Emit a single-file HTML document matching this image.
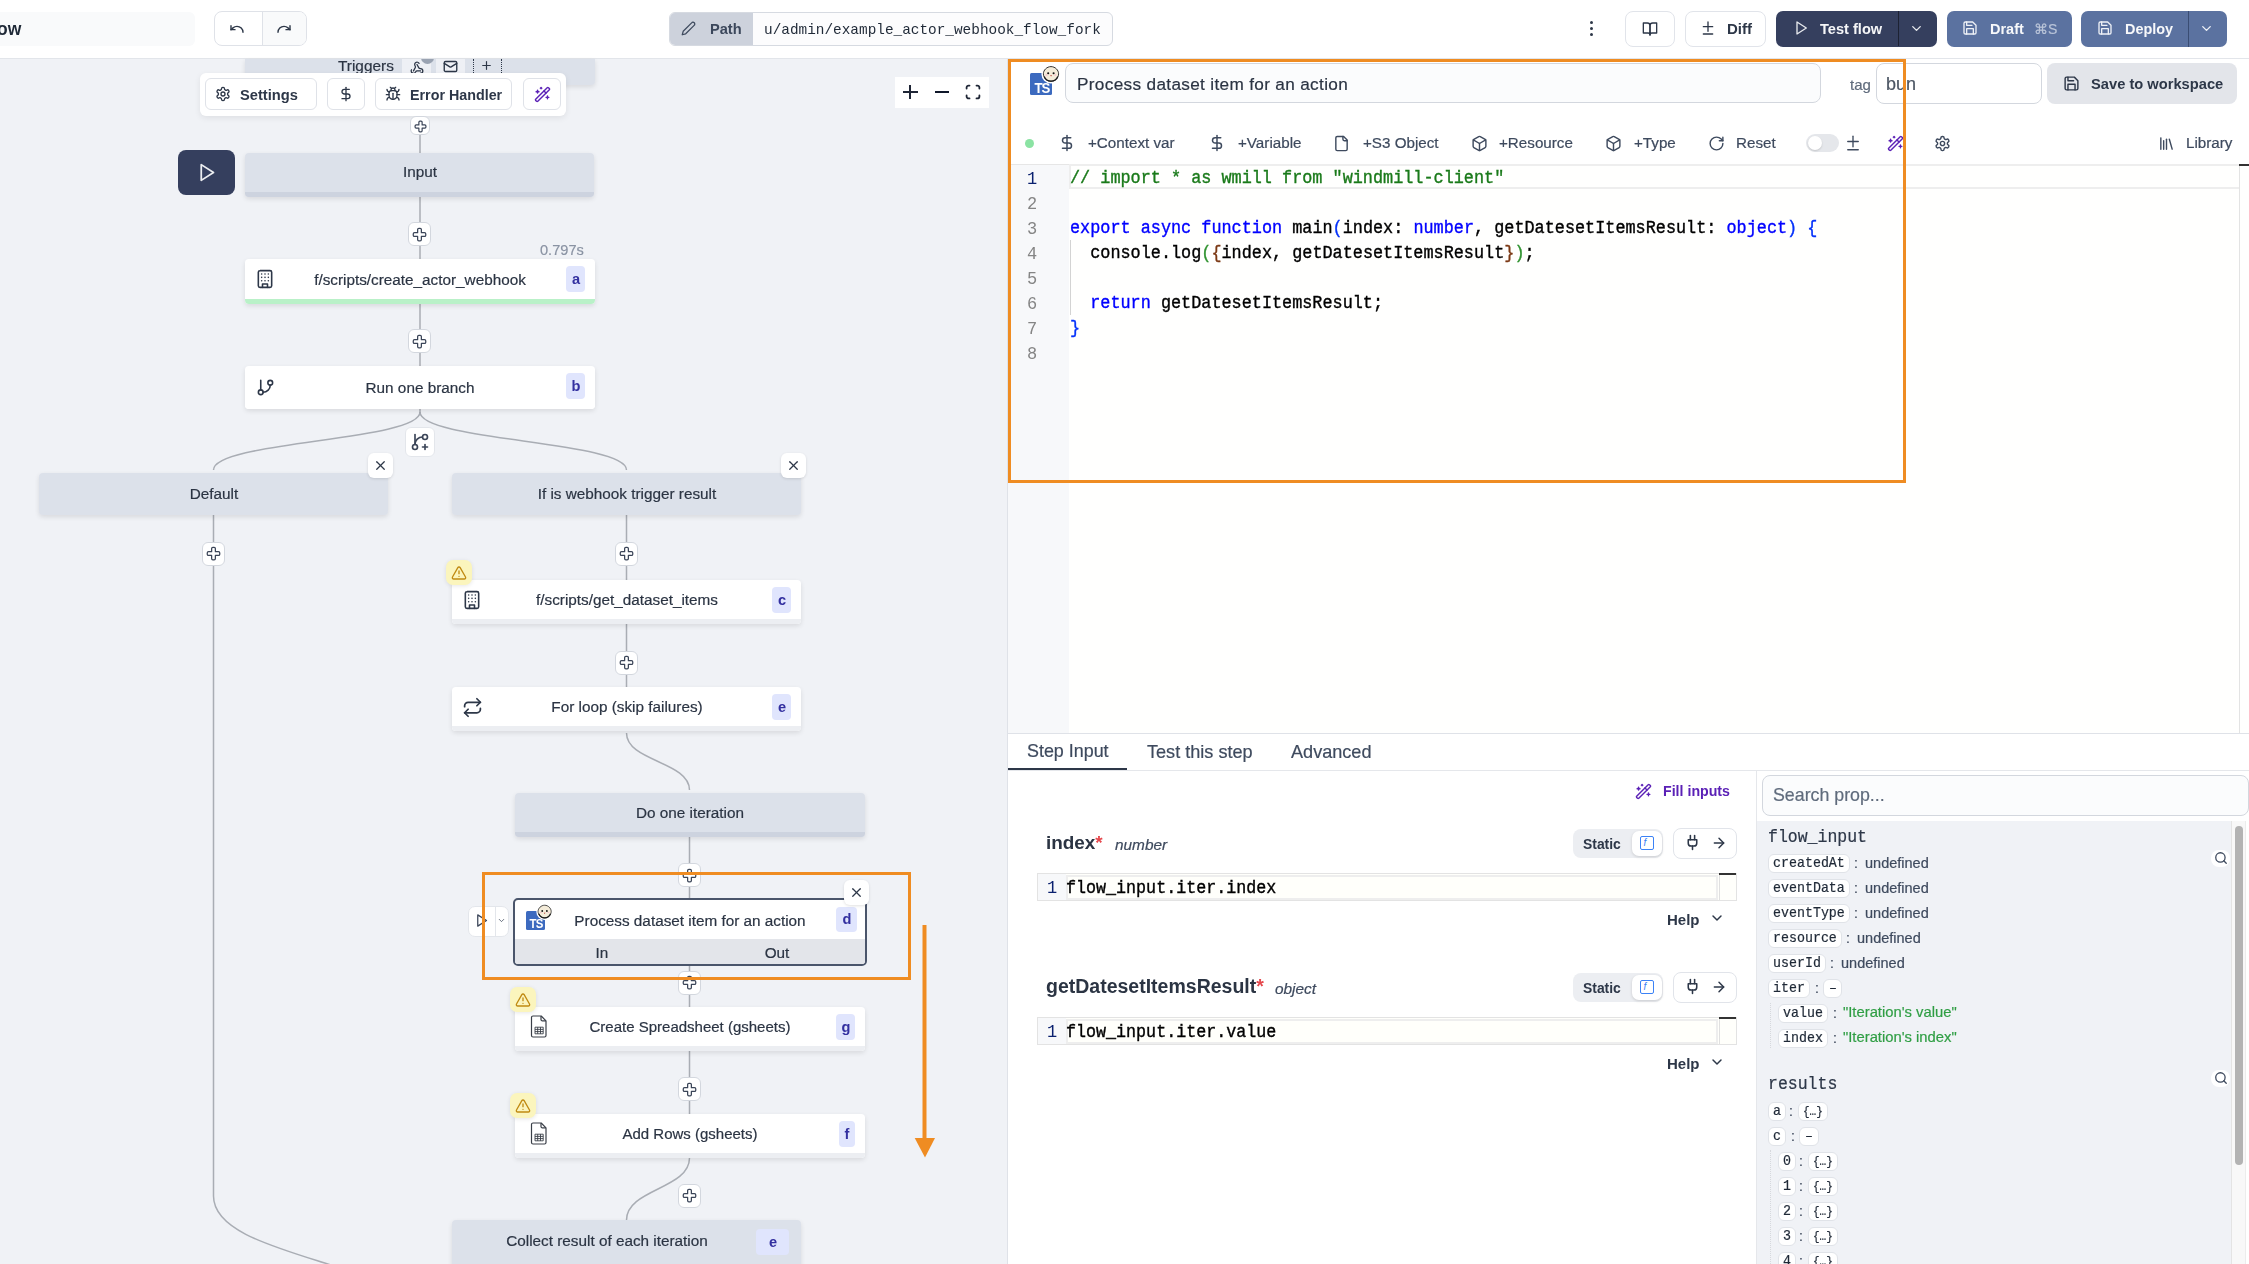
<!DOCTYPE html>
<html><head><meta charset="utf-8"><style>
html,body{margin:0;padding:0}
body{width:2249px;height:1264px;position:relative;overflow:hidden;font-family:"Liberation Sans",sans-serif;background:#fff}
.a{position:absolute}
.t{position:absolute;white-space:nowrap;will-change:transform}
</style></head><body>
<div class="a" style="left:0px;top:0px;width:2249px;height:58px;background:#fff;border-bottom:1px solid #e2e5ea;"></div>
<div class="a" style="left:-10px;top:12px;width:205px;height:34px;background:#f9fafb;border-radius:6px;"></div>
<div class="t" style="right:2228.00px;top:20.98px;font-size:17.5px;line-height:17.5px;color:#1f2937;font-weight:bold;">ow</div>
<div class="a" style="left:214px;top:11px;width:93px;height:35px;border:1px solid #dfe2e8;border-radius:8px;box-sizing:border-box;background:#fff;overflow:hidden;"><div class="a" style="left:47px;top:0;width:46px;height:35px;background:#f9fafb;border-left:1px solid #dfe2e8;"></div></div>
<svg class="a" style="left:229px;top:20.5px;" width="16" height="16" viewBox="0 0 24 24" fill="none" stroke="#2d3748" stroke-width="2.1" stroke-linecap="round" stroke-linejoin="round"><path d="M3 7v6h6"/><path d="M21 17a9 9 0 0 0-9-9 9 9 0 0 0-6 2.3L3 13"/></svg>
<svg class="a" style="left:276px;top:20.5px;" width="16" height="16" viewBox="0 0 24 24" fill="none" stroke="#2d3748" stroke-width="2.1" stroke-linecap="round" stroke-linejoin="round"><path d="M21 7v6h-6"/><path d="M3 17a9 9 0 0 1 9-9 9 9 0 0 1 6 2.3l3 2.7"/></svg>
<div class="a" style="left:669px;top:12px;width:444px;height:34px;border:1px solid #d6dae1;border-radius:6px;box-sizing:border-box;background:#fcfcfd;overflow:hidden;"><div class="a" style="left:0;top:0;width:83px;height:34px;background:#cdd2dc;"></div></div>
<svg class="a" style="left:681px;top:21px;" width="15" height="15" viewBox="0 0 24 24" fill="none" stroke="#3e4a5e" stroke-width="2" stroke-linecap="round" stroke-linejoin="round"><path d="M17 3a2.85 2.83 0 1 1 4 4L7.5 20.5 2 22l1.5-5.5Z"/></svg>
<div class="t" style="left:710.00px;top:21.64px;font-size:14.6px;line-height:14.6px;color:#3b475b;font-weight:bold;">Path</div>
<div class="t" style="left:763.50px;top:22.97px;font-size:14.4px;line-height:14.4px;color:#1f2937;font-weight:normal;font-family:'Liberation Mono',monospace;">u/admin/example_actor_webhook_flow_fork</div>
<div class="a" style="left:1589.7px;top:20.9px;width:3.2px;height:3.2px;background:#2d3748;border-radius:50%;"></div>
<div class="a" style="left:1589.7px;top:26.9px;width:3.2px;height:3.2px;background:#2d3748;border-radius:50%;"></div>
<div class="a" style="left:1589.7px;top:32.9px;width:3.2px;height:3.2px;background:#2d3748;border-radius:50%;"></div>
<div class="a" style="left:1625px;top:11px;width:50px;height:35.5px;border:1px solid #e1e4ea;border-radius:8px;box-sizing:border-box;background:#fff;"></div>
<svg class="a" style="left:1642px;top:21px;" width="16" height="16" viewBox="0 0 24 24" fill="none" stroke="#2d3748" stroke-width="2" stroke-linecap="round" stroke-linejoin="round"><path d="M2 3h6a4 4 0 0 1 4 4v14a3 3 0 0 0-3-3H2z"/><path d="M22 3h-6a4 4 0 0 0-4 4v14a3 3 0 0 1 3-3h7z"/></svg>
<div class="a" style="left:1685px;top:11px;width:81px;height:35.5px;border:1px solid #e1e4ea;border-radius:8px;box-sizing:border-box;background:#fff;"></div>
<svg class="a" style="left:1700px;top:20px;" width="16" height="16" viewBox="0 0 24 24" fill="none" stroke="#2d3748" stroke-width="2" stroke-linecap="round" stroke-linejoin="round"><path d="M12 3v14"/><path d="M5 10h14"/><path d="M5 21h14"/></svg>
<div class="t" style="left:1727.00px;top:21.30px;font-size:15px;line-height:15px;color:#2d3748;font-weight:bold;">Diff</div>
<div class="a" style="left:1776px;top:11px;width:161px;height:35.5px;background:#353f5e;border-radius:7px;"><div class="a" style="left:122px;top:0;width:1px;height:35px;background:#1d2233;"></div></div>
<svg class="a" style="left:1793px;top:20px;" width="16" height="16" viewBox="0 0 24 24" fill="none" stroke="#e8eaee" stroke-width="2" stroke-linecap="round" stroke-linejoin="round"><polygon points="6 3 20 12 6 21 6 3"/></svg>
<div class="t" style="left:1820.00px;top:21.64px;font-size:14.6px;line-height:14.6px;color:#f5f6f8;font-weight:bold;">Test flow</div>
<svg class="a" style="left:1909px;top:21px;" width="15" height="15" viewBox="0 0 24 24" fill="none" stroke="#e8eaee" stroke-width="2.2" stroke-linecap="round" stroke-linejoin="round"><path d="m6 9 6 6 6-6"/></svg>
<div class="a" style="left:1947px;top:11px;width:125px;height:36px;background:#5b72a0;border-radius:7px;"></div>
<svg class="a" style="left:1962px;top:20px;" width="16" height="16" viewBox="0 0 24 24" fill="none" stroke="#eef1f6" stroke-width="2" stroke-linecap="round" stroke-linejoin="round"><path d="M19 21H5a2 2 0 0 1-2-2V5a2 2 0 0 1 2-2h11l5 5v11a2 2 0 0 1-2 2z"/><polyline points="17 21 17 13 7 13 7 21"/><polyline points="7 3 7 8 15 8"/></svg>
<div class="t" style="left:1990.00px;top:21.72px;font-size:14.5px;line-height:14.5px;color:#f7f8fa;font-weight:bold;">Draft</div>
<div class="t" style="left:2034.00px;top:22.15px;font-size:14px;line-height:14px;color:#b9c4d8;font-weight:normal;-webkit-text-stroke:0.2px currentColor;">&#8984;S</div>
<div class="a" style="left:2081px;top:11px;width:146px;height:36px;background:#5b72a0;border-radius:7px;"><div class="a" style="left:107px;top:0;width:1px;height:36px;background:#3a4d73;"></div></div>
<svg class="a" style="left:2097px;top:20px;" width="16" height="16" viewBox="0 0 24 24" fill="none" stroke="#eef1f6" stroke-width="2" stroke-linecap="round" stroke-linejoin="round"><path d="M19 21H5a2 2 0 0 1-2-2V5a2 2 0 0 1 2-2h11l5 5v11a2 2 0 0 1-2 2z"/><polyline points="17 21 17 13 7 13 7 21"/><polyline points="7 3 7 8 15 8"/></svg>
<div class="t" style="left:2125.00px;top:21.77px;font-size:14.45px;line-height:14.45px;color:#f7f8fa;font-weight:bold;">Deploy</div>
<svg class="a" style="left:2199px;top:21px;" width="15" height="15" viewBox="0 0 24 24" fill="none" stroke="#eef1f6" stroke-width="2.2" stroke-linecap="round" stroke-linejoin="round"><path d="m6 9 6 6 6-6"/></svg>
<div class="a" style="left:0px;top:59px;width:1007px;height:1205px;background:#f0f2f6;overflow:hidden;"></div>
<svg class="a" style="left:0;top:0" width="1007" height="1264" fill="none" stroke="#a9adb4" stroke-width="1.5"><path d="M420 84 V153 M420 197 V259 M420 304 V366 M420 409 V413"/><path d="M420 412 C420 441 213.5 441 213.5 470"/><path d="M420 412 C420 441 626.5 441 626.5 470"/><path d="M213.5 515 V1196 C213.5 1260.5 420 1260.5 420 1325"/><path d="M626.5 515 V580 M626.5 624 V687"/><path d="M626.5 733 C626.5 761.5 689.5 761.5 689.5 790"/><path d="M689.5 837 V898 M689.5 966 V1007 M689.5 1051 V1114"/><path d="M689.5 1158 C689.5 1189 626.5 1189 626.5 1220"/></svg>
<div class="a" style="left:245px;top:59px;width:350px;height:25.5px;background:#dce1ea;border-radius:0 0 4px 4px;box-shadow:0 2px 5px rgba(0,0,0,0.10);"></div>
<div class="a" style="left:402px;top:59px;width:29px;height:14px;background:#eef0f5;"></div>
<div class="a" style="left:436px;top:59px;width:29px;height:14px;background:#eef0f5;"></div>
<div class="t" style="left:338.00px;top:57.96px;font-size:15.4px;line-height:15.4px;color:#2b3443;font-weight:normal;-webkit-text-stroke:0.2px currentColor;">Triggers</div>
<svg class="a" style="left:410px;top:61px;" width="14" height="14" viewBox="0 0 24 24" fill="none" stroke="#2d3748" stroke-width="2.2" stroke-linecap="round" stroke-linejoin="round"><path d="M18 16.98h-5.99c-1.1 0-1.95.94-2.48 1.9A4 4 0 0 1 2 17c.01-.7.2-1.4.57-2"/><path d="m6 17 3.13-5.78c.53-.97.1-2.18-.5-3.1a4 4 0 1 1 6.89-4.06"/><path d="m12 6 3.13 5.73C15.66 12.7 16.9 13 18 13a4 4 0 0 1 0 8"/></svg>
<div class="a" style="left:421px;top:59px;width:13px;height:5px;overflow:hidden;"><div class="a" style="left:0;top:-8px;width:13px;height:13px;border-radius:50%;background:#9aa3b2;"></div></div>
<svg class="a" style="left:443px;top:59px;" width="15" height="15" viewBox="0 0 24 24" fill="none" stroke="#2d3748" stroke-width="2.2" stroke-linecap="round" stroke-linejoin="round"><rect width="20" height="16" x="2" y="4" rx="2"/><path d="m22 7-8.97 5.7a1.94 1.94 0 0 1-2.06 0L2 7"/></svg>
<div class="a" style="left:473px;top:59px;width:0;height:14px;border-left:1.5px dotted #2d3748;"></div>
<div class="a" style="left:501px;top:59px;width:0;height:14px;border-left:1.5px dotted #2d3748;"></div>
<svg class="a" style="left:480px;top:59px;" width="13" height="13" viewBox="0 0 24 24" fill="none" stroke="#2d3748" stroke-width="2.2" stroke-linecap="round" stroke-linejoin="round"><path d="M5 12h14"/><path d="M12 5v14"/></svg>
<div class="a" style="left:200px;top:73px;width:366px;height:43px;background:#fff;border-radius:6px;box-shadow:0 2px 6px rgba(0,0,0,0.08);"></div>
<div class="a" style="left:205px;top:78px;width:112px;height:32px;background:#fff;border:1px solid #dfe2e8;border-radius:6px;box-sizing:border-box;"></div>
<svg class="a" style="left:215px;top:86px;" width="16" height="16" viewBox="0 0 24 24" fill="none" stroke="#2d3748" stroke-width="2" stroke-linecap="round" stroke-linejoin="round"><path d="M12.22 2h-.44a2 2 0 0 0-2 2v.18a2 2 0 0 1-1 1.73l-.43.25a2 2 0 0 1-2 0l-.15-.08a2 2 0 0 0-2.73.73l-.22.38a2 2 0 0 0 .73 2.73l.15.1a2 2 0 0 1 1 1.72v.51a2 2 0 0 1-1 1.74l-.15.09a2 2 0 0 0-.73 2.73l.22.38a2 2 0 0 0 2.73.73l.15-.08a2 2 0 0 1 2 0l.43.25a2 2 0 0 1 1 1.73V20a2 2 0 0 0 2 2h.44a2 2 0 0 0 2-2v-.18a2 2 0 0 1 1-1.73l.43-.25a2 2 0 0 1 2 0l.15.08a2 2 0 0 0 2.73-.73l.22-.39a2 2 0 0 0-.73-2.73l-.15-.08a2 2 0 0 1-1-1.74v-.5a2 2 0 0 1 1-1.74l.15-.09a2 2 0 0 0 .73-2.73l-.22-.38a2 2 0 0 0-2.73-.73l-.15.08a2 2 0 0 1-2 0l-.43-.25a2 2 0 0 1-1-1.73V4a2 2 0 0 0-2-2z"/><circle cx="12" cy="12" r="3"/></svg>
<div class="t" style="left:240.00px;top:87.55px;font-size:14.7px;line-height:14.7px;color:#2d3748;font-weight:bold;">Settings</div>
<div class="a" style="left:327px;top:78px;width:38px;height:32px;background:#fff;border:1px solid #dfe2e8;border-radius:6px;box-sizing:border-box;"></div>
<svg class="a" style="left:338px;top:86px;" width="16" height="16" viewBox="0 0 24 24" fill="none" stroke="#2d3748" stroke-width="2" stroke-linecap="round" stroke-linejoin="round"><line x1="12" x2="12" y1="2" y2="22"/><path d="M17 5H9.5a3.5 3.5 0 0 0 0 7h5a3.5 3.5 0 0 1 0 7H6"/></svg>
<div class="a" style="left:375px;top:78px;width:137px;height:32px;background:#fff;border:1px solid #dfe2e8;border-radius:6px;box-sizing:border-box;"></div>
<svg class="a" style="left:385px;top:86px;" width="16" height="16" viewBox="0 0 24 24" fill="none" stroke="#2d3748" stroke-width="2" stroke-linecap="round" stroke-linejoin="round"><path d="m8 2 1.88 1.88"/><path d="M14.12 3.88 16 2"/><path d="M9 7.13v-1a3.003 3.003 0 1 1 6 0v1"/><path d="M12 20c-3.3 0-6-2.7-6-6v-3a4 4 0 0 1 4-4h4a4 4 0 0 1 4 4v3c0 3.3-2.7 6-6 6"/><path d="M12 20v-9"/><path d="M6.53 9C4.6 8.8 3 7.1 3 5"/><path d="M6 13H2"/><path d="M3 21c0-2.1 1.7-3.9 3.8-4"/><path d="M20.97 5c0 2.1-1.6 3.8-3.5 4"/><path d="M22 13h-4"/><path d="M17.2 17c2.1.1 3.8 1.9 3.8 4"/></svg>
<div class="t" style="left:409.50px;top:87.89px;font-size:14.3px;line-height:14.3px;color:#2d3748;font-weight:bold;">Error Handler</div>
<div class="a" style="left:523px;top:78px;width:38px;height:32px;background:#fff;border:1px solid #dfe2e8;border-radius:6px;box-sizing:border-box;"></div>
<svg class="a" style="left:533.5px;top:85.5px;" width="17" height="17" viewBox="0 0 24 24" fill="none" stroke="#5b21b6" stroke-width="2" stroke-linecap="round" stroke-linejoin="round"><path d="m21.64 3.64-1.28-1.28a1.21 1.21 0 0 0-1.72 0L2.36 18.64a1.21 1.21 0 0 0 0 1.72l1.28 1.28a1.2 1.2 0 0 0 1.72 0L21.64 5.36a1.2 1.2 0 0 0 0-1.72"/><path d="m14 7 3 3"/><path d="M5 6v4"/><path d="M19 14v4"/><path d="M10 2v2"/><path d="M7 8H3"/><path d="M21 16h-4"/><path d="M11 3H9"/></svg>
<div class="a" style="left:410.2px;top:116.3px;width:19.6px;height:19.2px;background:#fff;border:1px solid #d3d7de;border-radius:6px;box-sizing:border-box;"></div>
<svg class="a" style="left:413.5px;top:119.5px;" width="13" height="13" viewBox="0 0 24 24" fill="none" stroke="#3b4558" stroke-width="2.2" stroke-linecap="round" stroke-linejoin="round"><path d="M11 2a2 2 0 0 0-2 2v5H4a2 2 0 0 0-2 2v2c0 1.1.9 2 2 2h5v5c0 1.1.9 2 2 2h2a2 2 0 0 0 2-2v-5h5a2 2 0 0 0 2-2v-2a2 2 0 0 0-2-2h-5V4a2 2 0 0 0-2-2h-2z"/></svg>
<div class="a" style="left:178px;top:150px;width:57px;height:45px;background:#353f5e;border-radius:8px;"></div>
<svg class="a" style="left:196px;top:162px;" width="21" height="21" viewBox="0 0 24 24" fill="none" stroke="#eceef1" stroke-width="2" stroke-linecap="round" stroke-linejoin="round"><polygon points="6 3 20 12 6 21 6 3"/></svg>
<div class="a" style="left:245px;top:153px;width:349px;height:44px;background:#dce1ea;border-radius:4px;box-shadow:0 2px 5px rgba(0,0,0,0.10);"><div class="a" style="left:0;top:39px;width:349px;height:5px;background:#cdd3df;border-radius:0 0 4px 4px"></div></div>
<div class="t" style="left:-80.50px;width:1000px;text-align:center;top:164.05px;font-size:15.3px;line-height:15.3px;color:#2b3443;font-weight:normal;-webkit-text-stroke:0.2px currentColor;">Input</div>
<div class="a" style="left:408.0px;top:222px;width:23px;height:24px;background:#fff;border:1px solid #d3d7de;border-radius:6px;box-sizing:border-box;"></div>
<svg class="a" style="left:412.0px;top:226.5px;" width="15" height="15" viewBox="0 0 24 24" fill="none" stroke="#3b4558" stroke-width="2" stroke-linecap="round" stroke-linejoin="round"><path d="M11 2a2 2 0 0 0-2 2v5H4a2 2 0 0 0-2 2v2c0 1.1.9 2 2 2h5v5c0 1.1.9 2 2 2h2a2 2 0 0 0 2-2v-5h5a2 2 0 0 0 2-2v-2a2 2 0 0 0-2-2h-5V4a2 2 0 0 0-2-2h-2z"/></svg>
<div class="t" style="right:1665.00px;top:242.64px;font-size:14.6px;line-height:14.6px;color:#8a93a3;font-weight:normal;-webkit-text-stroke:0.2px currentColor;">0.797s</div>
<div class="a" style="left:245px;top:259px;width:350px;height:45px;background:#fff;border-radius:4px;overflow:hidden;box-shadow:0 2px 5px rgba(0,0,0,0.10);"><div class="a" style="left:0;top:40px;width:350px;height:5px;background:#b9f1c8;"></div></div>
<div class="t" style="left:-80.00px;width:1000px;text-align:center;top:272.35px;font-size:15.3px;line-height:15.3px;color:#2b3443;font-weight:normal;-webkit-text-stroke:0.2px currentColor;">f/scripts/create_actor_webhook</div>
<div class="a" style="left:566px;top:266px;width:19px;height:26px;background:#e0e5fd;border-radius:4px;"></div>
<div class="t" style="left:75.50px;width:1000px;text-align:center;top:271.84px;font-size:14.6px;line-height:14.6px;color:#3330a0;font-weight:bold;">a</div>
<svg class="a" style="left:254.7px;top:269.3px;" width="20" height="20" viewBox="0 0 24 24" fill="none" stroke="#2d3748" stroke-width="1.9" stroke-linecap="round" stroke-linejoin="round"><rect width="16" height="20" x="4" y="2" rx="2" ry="2"/><path d="M9 22v-4h6v4"/><path d="M8 6h.01"/><path d="M16 6h.01"/><path d="M12 6h.01"/><path d="M12 10h.01"/><path d="M12 14h.01"/><path d="M16 10h.01"/><path d="M16 14h.01"/><path d="M8 10h.01"/><path d="M8 14h.01"/></svg>
<div class="a" style="left:408.0px;top:329px;width:23px;height:24px;background:#fff;border:1px solid #d3d7de;border-radius:6px;box-sizing:border-box;"></div>
<svg class="a" style="left:412.0px;top:333.5px;" width="15" height="15" viewBox="0 0 24 24" fill="none" stroke="#3b4558" stroke-width="2" stroke-linecap="round" stroke-linejoin="round"><path d="M11 2a2 2 0 0 0-2 2v5H4a2 2 0 0 0-2 2v2c0 1.1.9 2 2 2h5v5c0 1.1.9 2 2 2h2a2 2 0 0 0 2-2v-5h5a2 2 0 0 0 2-2v-2a2 2 0 0 0-2-2h-5V4a2 2 0 0 0-2-2h-2z"/></svg>
<div class="a" style="left:245px;top:366px;width:350px;height:43px;background:#fff;border-radius:4px;overflow:hidden;box-shadow:0 2px 5px rgba(0,0,0,0.10);"><div class="a" style="left:0;top:38px;width:350px;height:5px;background:#fff;"></div></div>
<div class="t" style="left:-80.00px;width:1000px;text-align:center;top:380.05px;font-size:15.3px;line-height:15.3px;color:#2b3443;font-weight:normal;-webkit-text-stroke:0.2px currentColor;">Run one branch</div>
<div class="a" style="left:566px;top:373px;width:19px;height:26px;background:#e0e5fd;border-radius:4px;"></div>
<div class="t" style="left:75.50px;width:1000px;text-align:center;top:378.84px;font-size:14.6px;line-height:14.6px;color:#3330a0;font-weight:bold;">b</div>
<svg class="a" style="left:256px;top:378px;" width="19" height="19" viewBox="0 0 24 24" fill="none" stroke="#2d3748" stroke-width="2" stroke-linecap="round" stroke-linejoin="round"><line x1="6" x2="6" y1="3" y2="15"/><circle cx="18" cy="6" r="3"/><circle cx="6" cy="18" r="3"/><path d="M18 9a9 9 0 0 1-9 9"/></svg>
<div class="a" style="left:405px;top:427px;width:30px;height:30px;background:#fff;border:1px solid #e3e6eb;border-radius:6px;box-sizing:border-box;"></div>
<svg class="a" style="left:410px;top:432px;" width="20" height="20" viewBox="0 0 24 24" fill="none" stroke="#3b4558" stroke-width="2" stroke-linecap="round" stroke-linejoin="round"><path d="M6 3v12"/><circle cx="18" cy="6" r="3"/><circle cx="6" cy="18" r="3"/><path d="M15 6a9 9 0 0 0-9 9"/><path d="M18 15v6"/><path d="M21 18h-6"/></svg>
<div class="a" style="left:39px;top:473px;width:349px;height:42px;background:#dce1ea;border-radius:4px;box-shadow:0 2px 5px rgba(0,0,0,0.10);"></div>
<div class="t" style="left:-286.50px;width:1000px;text-align:center;top:486.05px;font-size:15.3px;line-height:15.3px;color:#2b3443;font-weight:normal;-webkit-text-stroke:0.2px currentColor;">Default</div>
<div class="a" style="left:452px;top:473px;width:349px;height:42px;background:#dce1ea;border-radius:4px;box-shadow:0 2px 5px rgba(0,0,0,0.10);"></div>
<div class="t" style="left:126.50px;width:1000px;text-align:center;top:486.05px;font-size:15.3px;line-height:15.3px;color:#2b3443;font-weight:normal;-webkit-text-stroke:0.2px currentColor;">If is webhook trigger result</div>
<div class="a" style="left:368px;top:453px;width:25px;height:25px;background:#fff;border-radius:6px;box-shadow:0 1px 3px rgba(0,0,0,0.12);"></div>
<svg class="a" style="left:373px;top:458px;" width="15" height="15" viewBox="0 0 24 24" fill="none" stroke="#2d3748" stroke-width="2.0" stroke-linecap="round" stroke-linejoin="round"><path d="M18 6 6 18"/><path d="m6 6 12 12"/></svg>
<div class="a" style="left:781px;top:453px;width:25px;height:25px;background:#fff;border-radius:6px;box-shadow:0 1px 3px rgba(0,0,0,0.12);"></div>
<svg class="a" style="left:786px;top:458px;" width="15" height="15" viewBox="0 0 24 24" fill="none" stroke="#2d3748" stroke-width="2.0" stroke-linecap="round" stroke-linejoin="round"><path d="M18 6 6 18"/><path d="m6 6 12 12"/></svg>
<div class="a" style="left:202.0px;top:541.5px;width:23px;height:24px;background:#fff;border:1px solid #d3d7de;border-radius:6px;box-sizing:border-box;"></div>
<svg class="a" style="left:206.0px;top:546.0px;" width="15" height="15" viewBox="0 0 24 24" fill="none" stroke="#3b4558" stroke-width="2" stroke-linecap="round" stroke-linejoin="round"><path d="M11 2a2 2 0 0 0-2 2v5H4a2 2 0 0 0-2 2v2c0 1.1.9 2 2 2h5v5c0 1.1.9 2 2 2h2a2 2 0 0 0 2-2v-5h5a2 2 0 0 0 2-2v-2a2 2 0 0 0-2-2h-5V4a2 2 0 0 0-2-2h-2z"/></svg>
<div class="a" style="left:615.0px;top:541.5px;width:23px;height:24px;background:#fff;border:1px solid #d3d7de;border-radius:6px;box-sizing:border-box;"></div>
<svg class="a" style="left:619.0px;top:546.0px;" width="15" height="15" viewBox="0 0 24 24" fill="none" stroke="#3b4558" stroke-width="2" stroke-linecap="round" stroke-linejoin="round"><path d="M11 2a2 2 0 0 0-2 2v5H4a2 2 0 0 0-2 2v2c0 1.1.9 2 2 2h5v5c0 1.1.9 2 2 2h2a2 2 0 0 0 2-2v-5h5a2 2 0 0 0 2-2v-2a2 2 0 0 0-2-2h-5V4a2 2 0 0 0-2-2h-2z"/></svg>
<div class="a" style="left:452px;top:580px;width:349px;height:44px;background:#fff;border-radius:4px;overflow:hidden;box-shadow:0 2px 5px rgba(0,0,0,0.10);"><div class="a" style="left:0;top:39px;width:349px;height:5px;background:#eceef2;"></div></div>
<div class="t" style="left:126.50px;width:1000px;text-align:center;top:592.05px;font-size:15.3px;line-height:15.3px;color:#2b3443;font-weight:normal;-webkit-text-stroke:0.2px currentColor;">f/scripts/get_dataset_items</div>
<div class="a" style="left:772px;top:587px;width:19px;height:26px;background:#e0e5fd;border-radius:4px;"></div>
<div class="t" style="left:281.50px;width:1000px;text-align:center;top:592.84px;font-size:14.6px;line-height:14.6px;color:#3330a0;font-weight:bold;">c</div>
<svg class="a" style="left:461.7px;top:590.3px;" width="20" height="20" viewBox="0 0 24 24" fill="none" stroke="#2d3748" stroke-width="1.9" stroke-linecap="round" stroke-linejoin="round"><rect width="16" height="20" x="4" y="2" rx="2" ry="2"/><path d="M9 22v-4h6v4"/><path d="M8 6h.01"/><path d="M16 6h.01"/><path d="M12 6h.01"/><path d="M12 10h.01"/><path d="M12 14h.01"/><path d="M16 10h.01"/><path d="M16 14h.01"/><path d="M8 10h.01"/><path d="M8 14h.01"/></svg>
<div class="a" style="left:615.0px;top:650.5px;width:23px;height:24px;background:#fff;border:1px solid #d3d7de;border-radius:6px;box-sizing:border-box;"></div>
<svg class="a" style="left:619.0px;top:655.0px;" width="15" height="15" viewBox="0 0 24 24" fill="none" stroke="#3b4558" stroke-width="2" stroke-linecap="round" stroke-linejoin="round"><path d="M11 2a2 2 0 0 0-2 2v5H4a2 2 0 0 0-2 2v2c0 1.1.9 2 2 2h5v5c0 1.1.9 2 2 2h2a2 2 0 0 0 2-2v-5h5a2 2 0 0 0 2-2v-2a2 2 0 0 0-2-2h-5V4a2 2 0 0 0-2-2h-2z"/></svg>
<div class="a" style="left:452px;top:687px;width:349px;height:44px;background:#fff;border-radius:4px;overflow:hidden;box-shadow:0 2px 5px rgba(0,0,0,0.10);"><div class="a" style="left:0;top:39px;width:349px;height:5px;background:#eceef2;"></div></div>
<div class="t" style="left:126.50px;width:1000px;text-align:center;top:699.05px;font-size:15.3px;line-height:15.3px;color:#2b3443;font-weight:normal;-webkit-text-stroke:0.2px currentColor;">For loop (skip failures)</div>
<div class="a" style="left:772px;top:694px;width:19px;height:26px;background:#e0e5fd;border-radius:4px;"></div>
<div class="t" style="left:281.50px;width:1000px;text-align:center;top:699.84px;font-size:14.6px;line-height:14.6px;color:#3330a0;font-weight:bold;">e</div>
<svg class="a" style="left:462px;top:697px;" width="21" height="21" viewBox="0 0 24 24" fill="none" stroke="#2d3748" stroke-width="2" stroke-linecap="round" stroke-linejoin="round"><path d="m17 2 4 4-4 4"/><path d="M3 11v-1a4 4 0 0 1 4-4h14"/><path d="m7 22-4-4 4-4"/><path d="M21 13v1a4 4 0 0 1-4 4H3"/></svg>
<div class="a" style="left:515px;top:793px;width:350px;height:44px;background:#dce1ea;border-radius:4px;box-shadow:0 2px 5px rgba(0,0,0,0.10);"><div class="a" style="left:0;top:39px;width:350px;height:5px;background:#cdd3df;border-radius:0 0 4px 4px"></div></div>
<div class="t" style="left:190.00px;width:1000px;text-align:center;top:805.05px;font-size:15.3px;line-height:15.3px;color:#2b3443;font-weight:normal;-webkit-text-stroke:0.2px currentColor;">Do one iteration</div>
<div class="a" style="left:678.0px;top:863px;width:23px;height:24px;background:#fff;border:1px solid #d3d7de;border-radius:6px;box-sizing:border-box;"></div>
<svg class="a" style="left:682.0px;top:867.5px;" width="15" height="15" viewBox="0 0 24 24" fill="none" stroke="#3b4558" stroke-width="2" stroke-linecap="round" stroke-linejoin="round"><path d="M11 2a2 2 0 0 0-2 2v5H4a2 2 0 0 0-2 2v2c0 1.1.9 2 2 2h5v5c0 1.1.9 2 2 2h2a2 2 0 0 0 2-2v-5h5a2 2 0 0 0 2-2v-2a2 2 0 0 0-2-2h-5V4a2 2 0 0 0-2-2h-2z"/></svg>
<div class="a" style="left:678.0px;top:970.5px;width:23px;height:24px;background:#fff;border:1px solid #d3d7de;border-radius:6px;box-sizing:border-box;"></div>
<svg class="a" style="left:682.0px;top:975.0px;" width="15" height="15" viewBox="0 0 24 24" fill="none" stroke="#3b4558" stroke-width="2" stroke-linecap="round" stroke-linejoin="round"><path d="M11 2a2 2 0 0 0-2 2v5H4a2 2 0 0 0-2 2v2c0 1.1.9 2 2 2h5v5c0 1.1.9 2 2 2h2a2 2 0 0 0 2-2v-5h5a2 2 0 0 0 2-2v-2a2 2 0 0 0-2-2h-5V4a2 2 0 0 0-2-2h-2z"/></svg>
<div class="a" style="left:513px;top:898px;width:354px;height:68px;background:#fff;border:2px solid #4a556b;border-radius:5px;box-sizing:border-box;overflow:hidden;"><div class="a" style="left:0;top:39px;width:350px;height:27px;background:#e3e5ea;"></div></div>
<div class="t" style="left:189.50px;width:1000px;text-align:center;top:912.65px;font-size:15.3px;line-height:15.3px;color:#2b3443;font-weight:normal;-webkit-text-stroke:0.2px currentColor;">Process dataset item for an action</div>
<div class="t" style="left:101.50px;width:1000px;text-align:center;top:945.05px;font-size:15.3px;line-height:15.3px;color:#2b3443;font-weight:normal;-webkit-text-stroke:0.2px currentColor;">In</div>
<div class="t" style="left:276.70px;width:1000px;text-align:center;top:945.05px;font-size:15.3px;line-height:15.3px;color:#2b3443;font-weight:normal;-webkit-text-stroke:0.2px currentColor;">Out</div>
<div class="a" style="left:836px;top:907px;width:21px;height:25px;background:#e0e5fd;border-radius:4px;"></div>
<div class="t" style="left:346.50px;width:1000px;text-align:center;top:912.34px;font-size:14.6px;line-height:14.6px;color:#3330a0;font-weight:bold;">d</div>
<div class="a" style="left:526px;top:911px;width:19px;height:19px;background:#3c6abf;border-radius:1.5px;"></div>
<div class="t" style="left:36.28px;width:1000px;text-align:center;top:918.97px;font-size:11.4px;line-height:11.4px;color:#fff;font-weight:bold;letter-spacing:-0.78px;transform:scaleY(1.12);transform-origin:50% 80%;">TS</div>
<svg class="a" style="left:535.50px;top:903.40px" width="17.27" height="17.27" viewBox="0 0 20 20"><circle cx="10" cy="10" r="9.6" fill="#fff"/><path d="M10 2.6 C14.2 2.6 17.6 6.2 17.6 9.8 C17.6 13.6 14.4 17.3 10 17.3 C5.6 17.3 2.4 13.6 2.4 9.8 C2.4 6.2 5.8 2.6 10 2.6Z" fill="#f4ecd9" stroke="#1c1c1c" stroke-width="0.9"/><path d="M3.2 12.5 C4.5 16 7 17.2 10 17.2 C13 17.2 15.5 16 16.8 12.5" fill="none" stroke="#1c1c1c" stroke-width="1.3"/><circle cx="7.2" cy="9.3" r="1.05" fill="#111"/><circle cx="12.6" cy="9.3" r="1.05" fill="#111"/><path d="M9.1 11.2 L11 11.2 L10.05 12.6Z" fill="#b3261e"/><ellipse cx="5.6" cy="11" rx="1.1" ry="0.7" fill="#f5b8c8"/><ellipse cx="14.3" cy="11" rx="1.1" ry="0.7" fill="#f5b8c8"/></svg>
<div class="a" style="left:844px;top:880px;width:25px;height:25px;background:#fff;border-radius:6px;box-shadow:0 1px 3px rgba(0,0,0,0.12);"></div>
<svg class="a" style="left:849px;top:885px;" width="15" height="15" viewBox="0 0 24 24" fill="none" stroke="#2d3748" stroke-width="2.0" stroke-linecap="round" stroke-linejoin="round"><path d="M18 6 6 18"/><path d="m6 6 12 12"/></svg>
<div class="a" style="left:468px;top:905.5px;width:41px;height:31px;background:#fff;border:1px solid #e3e6eb;border-radius:7px;box-sizing:border-box;"><div class="a" style="left:26px;top:0;width:1px;height:29px;background:#e3e6eb;"></div></div>
<svg class="a" style="left:474px;top:913px;" width="15" height="15" viewBox="0 0 24 24" fill="none" stroke="#3b4558" stroke-width="2" stroke-linecap="round" stroke-linejoin="round"><polygon points="6 3 20 12 6 21 6 3"/></svg>
<svg class="a" style="left:497px;top:916px;" width="9" height="9" viewBox="0 0 24 24" fill="none" stroke="#3b4558" stroke-width="2" stroke-linecap="round" stroke-linejoin="round"><path d="m6 9 6 6 6-6"/></svg>
<div class="a" style="left:515px;top:1007px;width:350px;height:44px;background:#fff;border-radius:4px;overflow:hidden;box-shadow:0 2px 5px rgba(0,0,0,0.10);"><div class="a" style="left:0;top:39px;width:350px;height:5px;background:#eceef2;"></div></div>
<div class="t" style="left:190.00px;width:1000px;text-align:center;top:1019.30px;font-size:15.0px;line-height:15.0px;color:#2b3443;font-weight:normal;-webkit-text-stroke:0.2px currentColor;">Create Spreadsheet (gsheets)</div>
<div class="a" style="left:836px;top:1014px;width:19px;height:26px;background:#e0e5fd;border-radius:4px;"></div>
<div class="t" style="left:345.50px;width:1000px;text-align:center;top:1019.84px;font-size:14.6px;line-height:14.6px;color:#3330a0;font-weight:bold;">g</div>
<svg class="a" style="left:530px;top:1015px" width="17.5" height="23.5" viewBox="0 0 17.5 23.5" fill="none" stroke="#3a3f48" stroke-width="1.2" stroke-linejoin="round"><path d="M1.5 2.5a1.5 1.5 0 0 1 1.5-1.5h8.2l4.8 4.8v14.7a1.5 1.5 0 0 1-1.5 1.5H3a1.5 1.5 0 0 1-1.5-1.5z"/><path d="M11 1v3.5a1.3 1.3 0 0 0 1.3 1.3H16"/><path d="M5 12.2h8.2v6.6H5z M5 14.4h8.2 M5 16.6h8.2 M7.7 12.2v6.6 M10.5 12.2v6.6" stroke-width="0.9"/></svg>
<div class="a" style="left:678.0px;top:1077px;width:23px;height:24px;background:#fff;border:1px solid #d3d7de;border-radius:6px;box-sizing:border-box;"></div>
<svg class="a" style="left:682.0px;top:1081.5px;" width="15" height="15" viewBox="0 0 24 24" fill="none" stroke="#3b4558" stroke-width="2" stroke-linecap="round" stroke-linejoin="round"><path d="M11 2a2 2 0 0 0-2 2v5H4a2 2 0 0 0-2 2v2c0 1.1.9 2 2 2h5v5c0 1.1.9 2 2 2h2a2 2 0 0 0 2-2v-5h5a2 2 0 0 0 2-2v-2a2 2 0 0 0-2-2h-5V4a2 2 0 0 0-2-2h-2z"/></svg>
<div class="a" style="left:515px;top:1114px;width:350px;height:44px;background:#fff;border-radius:4px;overflow:hidden;box-shadow:0 2px 5px rgba(0,0,0,0.10);"><div class="a" style="left:0;top:39px;width:350px;height:5px;background:#eceef2;"></div></div>
<div class="t" style="left:190.00px;width:1000px;text-align:center;top:1126.30px;font-size:15.0px;line-height:15.0px;color:#2b3443;font-weight:normal;-webkit-text-stroke:0.2px currentColor;">Add Rows (gsheets)</div>
<div class="a" style="left:839px;top:1121px;width:16px;height:26px;background:#e0e5fd;border-radius:4px;"></div>
<div class="t" style="left:347.00px;width:1000px;text-align:center;top:1126.84px;font-size:14.6px;line-height:14.6px;color:#3330a0;font-weight:bold;">f</div>
<svg class="a" style="left:530px;top:1122px" width="17.5" height="23.5" viewBox="0 0 17.5 23.5" fill="none" stroke="#3a3f48" stroke-width="1.2" stroke-linejoin="round"><path d="M1.5 2.5a1.5 1.5 0 0 1 1.5-1.5h8.2l4.8 4.8v14.7a1.5 1.5 0 0 1-1.5 1.5H3a1.5 1.5 0 0 1-1.5-1.5z"/><path d="M11 1v3.5a1.3 1.3 0 0 0 1.3 1.3H16"/><path d="M5 12.2h8.2v6.6H5z M5 14.4h8.2 M5 16.6h8.2 M7.7 12.2v6.6 M10.5 12.2v6.6" stroke-width="0.9"/></svg>
<div class="a" style="left:678.0px;top:1183.5px;width:23px;height:24px;background:#fff;border:1px solid #d3d7de;border-radius:6px;box-sizing:border-box;"></div>
<svg class="a" style="left:682.0px;top:1188.0px;" width="15" height="15" viewBox="0 0 24 24" fill="none" stroke="#3b4558" stroke-width="2" stroke-linecap="round" stroke-linejoin="round"><path d="M11 2a2 2 0 0 0-2 2v5H4a2 2 0 0 0-2 2v2c0 1.1.9 2 2 2h5v5c0 1.1.9 2 2 2h2a2 2 0 0 0 2-2v-5h5a2 2 0 0 0 2-2v-2a2 2 0 0 0-2-2h-5V4a2 2 0 0 0-2-2h-2z"/></svg>
<div class="a" style="left:452px;top:1220px;width:349px;height:70px;background:#dce1ea;border-radius:4px;box-shadow:0 2px 5px rgba(0,0,0,0.10);"></div>
<div class="t" style="left:107.00px;width:1000px;text-align:center;top:1233.05px;font-size:15.3px;line-height:15.3px;color:#2b3443;font-weight:normal;-webkit-text-stroke:0.2px currentColor;">Collect result of each iteration</div>
<div class="a" style="left:756px;top:1229px;width:33px;height:26px;background:#e0e5fd;border-radius:4px;"></div>
<div class="t" style="left:272.50px;width:1000px;text-align:center;top:1234.84px;font-size:14.6px;line-height:14.6px;color:#3330a0;font-weight:bold;">e</div>
<div class="a" style="left:446px;top:560px;width:26px;height:25px;background:#fbf5bd;border-radius:7px;box-shadow:0 1px 4px rgba(0,0,0,.10);"></div>
<svg class="a" style="left:451px;top:564.5px;" width="16" height="16" viewBox="0 0 24 24" fill="none" stroke="#c08a12" stroke-width="2" stroke-linecap="round" stroke-linejoin="round"><path d="m21.73 18-8-14a2 2 0 0 0-3.48 0l-8 14A2 2 0 0 0 4 21h16a2 2 0 0 0 1.73-3"/><path d="M12 9v4"/><path d="M12 17h.01"/></svg>
<div class="a" style="left:510.4px;top:987.2px;width:26px;height:25px;background:#fbf5bd;border-radius:7px;box-shadow:0 1px 4px rgba(0,0,0,.10);"></div>
<svg class="a" style="left:515.4px;top:991.7px;" width="16" height="16" viewBox="0 0 24 24" fill="none" stroke="#c08a12" stroke-width="2" stroke-linecap="round" stroke-linejoin="round"><path d="m21.73 18-8-14a2 2 0 0 0-3.48 0l-8 14A2 2 0 0 0 4 21h16a2 2 0 0 0 1.73-3"/><path d="M12 9v4"/><path d="M12 17h.01"/></svg>
<div class="a" style="left:510.4px;top:1093.3px;width:26px;height:25px;background:#fbf5bd;border-radius:7px;box-shadow:0 1px 4px rgba(0,0,0,.10);"></div>
<svg class="a" style="left:515.4px;top:1097.8px;" width="16" height="16" viewBox="0 0 24 24" fill="none" stroke="#c08a12" stroke-width="2" stroke-linecap="round" stroke-linejoin="round"><path d="m21.73 18-8-14a2 2 0 0 0-3.48 0l-8 14A2 2 0 0 0 4 21h16a2 2 0 0 0 1.73-3"/><path d="M12 9v4"/><path d="M12 17h.01"/></svg>
<div class="a" style="left:895px;top:77px;width:94px;height:31px;background:#fff;"></div>
<div class="a" style="left:903px;top:91px;width:14.5px;height:2px;background:#1e2535;"></div>
<div class="a" style="left:909.2px;top:85px;width:2px;height:14px;background:#1e2535;"></div>
<div class="a" style="left:935px;top:91px;width:14px;height:2px;background:#0f172a;"></div>
<svg class="a" style="left:965px;top:84px;" width="16" height="16" viewBox="0 0 16 16" fill="none" stroke="#1e2535" stroke-width="1.8" stroke-linecap="round" stroke-linejoin="round"><path d="M1.6 4.5V3.6a2 2 0 0 1 2-2h.9M11.5 1.6h.9a2 2 0 0 1 2 2v.9M14.4 11.5v.9a2 2 0 0 1-2 2h-.9M4.5 14.4h-.9a2 2 0 0 1-2-2v-.9"/></svg>
<div class="a" style="left:1007px;top:59px;width:1242px;height:1205px;background:#fff;border-left:1px solid #dfe2e8;box-sizing:border-box;"></div>
<div class="a" style="left:1030px;top:73px;width:22px;height:22px;background:#3c6abf;border-radius:1.5px;"></div>
<div class="t" style="left:541.90px;width:1000px;text-align:center;top:82.22px;font-size:13.2px;line-height:13.2px;color:#fff;font-weight:bold;letter-spacing:-0.90px;transform:scaleY(1.12);transform-origin:50% 80%;">TS</div>
<svg class="a" style="left:1041.00px;top:64.20px" width="20.00" height="20.00" viewBox="0 0 20 20"><circle cx="10" cy="10" r="9.6" fill="#fff"/><path d="M10 2.6 C14.2 2.6 17.6 6.2 17.6 9.8 C17.6 13.6 14.4 17.3 10 17.3 C5.6 17.3 2.4 13.6 2.4 9.8 C2.4 6.2 5.8 2.6 10 2.6Z" fill="#f4ecd9" stroke="#1c1c1c" stroke-width="0.9"/><path d="M3.2 12.5 C4.5 16 7 17.2 10 17.2 C13 17.2 15.5 16 16.8 12.5" fill="none" stroke="#1c1c1c" stroke-width="1.3"/><circle cx="7.2" cy="9.3" r="1.05" fill="#111"/><circle cx="12.6" cy="9.3" r="1.05" fill="#111"/><path d="M9.1 11.2 L11 11.2 L10.05 12.6Z" fill="#b3261e"/><ellipse cx="5.6" cy="11" rx="1.1" ry="0.7" fill="#f5b8c8"/><ellipse cx="14.3" cy="11" rx="1.1" ry="0.7" fill="#f5b8c8"/></svg>
<div class="a" style="left:1065px;top:63px;width:756px;height:40px;background:#fbfcfd;border:1px solid #d3d7de;border-radius:8px;box-sizing:border-box;"></div>
<div class="t" style="left:1076.70px;top:76.44px;font-size:17.2px;line-height:17.2px;color:#2b3443;font-weight:normal;-webkit-text-stroke:0.2px currentColor;letter-spacing:0.33px;">Process dataset item for an action</div>
<div class="t" style="left:1850.00px;top:77.30px;font-size:15px;line-height:15px;color:#5f6b7c;font-weight:normal;-webkit-text-stroke:0.2px currentColor;">tag</div>
<div class="a" style="left:1875.5px;top:63px;width:166px;height:40.5px;background:#fff;border:1px solid #d3d7de;border-radius:8px;box-sizing:border-box;"></div>
<div class="t" style="left:1886.00px;top:74.76px;font-size:18px;line-height:18px;color:#4b5563;font-weight:normal;-webkit-text-stroke:0.2px currentColor;">bun</div>
<div class="a" style="left:2047px;top:63px;width:190px;height:40.5px;background:#e3e5ea;border-radius:8px;"></div>
<svg class="a" style="left:2063px;top:75px;" width="17" height="17" viewBox="0 0 24 24" fill="none" stroke="#2d3748" stroke-width="2" stroke-linecap="round" stroke-linejoin="round"><path d="M19 21H5a2 2 0 0 1-2-2V5a2 2 0 0 1 2-2h11l5 5v11a2 2 0 0 1-2 2z"/><polyline points="17 21 17 13 7 13 7 21"/><polyline points="7 3 7 8 15 8"/></svg>
<div class="t" style="left:2091.00px;top:76.75px;font-size:14.7px;line-height:14.7px;color:#2d3748;font-weight:bold;">Save to workspace</div>
<div class="a" style="left:1025.1px;top:138.8px;width:9px;height:9px;background:#8be3a3;border-radius:50%;"></div>
<svg class="a" style="left:1058px;top:134px;" width="18" height="18" viewBox="0 0 24 24" fill="none" stroke="#3e4a5e" stroke-width="2" stroke-linecap="round" stroke-linejoin="round"><line x1="12" x2="12" y1="2" y2="22"/><path d="M17 5H9.5a3.5 3.5 0 0 0 0 7h5a3.5 3.5 0 0 1 0 7H6"/></svg>
<div class="t" style="left:1087.70px;top:135.13px;font-size:15.2px;line-height:15.2px;color:#3e4a5e;font-weight:normal;-webkit-text-stroke:0.2px currentColor;">+Context var</div>
<svg class="a" style="left:1208px;top:134px;" width="18" height="18" viewBox="0 0 24 24" fill="none" stroke="#3e4a5e" stroke-width="2" stroke-linecap="round" stroke-linejoin="round"><line x1="12" x2="12" y1="2" y2="22"/><path d="M17 5H9.5a3.5 3.5 0 0 0 0 7h5a3.5 3.5 0 0 1 0 7H6"/></svg>
<div class="t" style="left:1237.60px;top:135.13px;font-size:15.2px;line-height:15.2px;color:#3e4a5e;font-weight:normal;-webkit-text-stroke:0.2px currentColor;">+Variable</div>
<svg class="a" style="left:1333px;top:135px;" width="17" height="17" viewBox="0 0 24 24" fill="none" stroke="#3e4a5e" stroke-width="2" stroke-linecap="round" stroke-linejoin="round"><path d="M15 2H6a2 2 0 0 0-2 2v16a2 2 0 0 0 2 2h12a2 2 0 0 0 2-2V7Z"/><path d="M14 2v4a2 2 0 0 0 2 2h4"/></svg>
<div class="t" style="left:1362.50px;top:135.13px;font-size:15.2px;line-height:15.2px;color:#3e4a5e;font-weight:normal;-webkit-text-stroke:0.2px currentColor;">+S3 Object</div>
<svg class="a" style="left:1470.5px;top:135px;" width="17" height="17" viewBox="0 0 24 24" fill="none" stroke="#3e4a5e" stroke-width="2" stroke-linecap="round" stroke-linejoin="round"><path d="M21 8a2 2 0 0 0-1-1.73l-7-4a2 2 0 0 0-2 0l-7 4A2 2 0 0 0 3 8v8a2 2 0 0 0 1 1.73l7 4a2 2 0 0 0 2 0l7-4A2 2 0 0 0 21 16Z"/><path d="m3.3 7 8.7 5 8.7-5"/><path d="M12 22V12"/></svg>
<div class="t" style="left:1499.40px;top:135.13px;font-size:15.2px;line-height:15.2px;color:#3e4a5e;font-weight:normal;-webkit-text-stroke:0.2px currentColor;">+Resource</div>
<svg class="a" style="left:1604.5px;top:135px;" width="17" height="17" viewBox="0 0 24 24" fill="none" stroke="#3e4a5e" stroke-width="2" stroke-linecap="round" stroke-linejoin="round"><path d="M21 8a2 2 0 0 0-1-1.73l-7-4a2 2 0 0 0-2 0l-7 4A2 2 0 0 0 3 8v8a2 2 0 0 0 1 1.73l7 4a2 2 0 0 0 2 0l7-4A2 2 0 0 0 21 16Z"/><path d="m3.3 7 8.7 5 8.7-5"/><path d="M12 22V12"/></svg>
<div class="t" style="left:1634.00px;top:135.13px;font-size:15.2px;line-height:15.2px;color:#3e4a5e;font-weight:normal;-webkit-text-stroke:0.2px currentColor;">+Type</div>
<svg class="a" style="left:1707.5px;top:135px;" width="17" height="17" viewBox="0 0 24 24" fill="none" stroke="#3e4a5e" stroke-width="2" stroke-linecap="round" stroke-linejoin="round"><path d="M21 12a9 9 0 1 1-9-9c2.52 0 4.93 1 6.74 2.74L21 8"/><path d="M21 3v5h-5"/></svg>
<div class="t" style="left:1736.00px;top:135.13px;font-size:15.2px;line-height:15.2px;color:#3e4a5e;font-weight:normal;-webkit-text-stroke:0.2px currentColor;">Reset</div>
<div class="a" style="left:1806px;top:134.3px;width:33px;height:18px;background:#e5e7eb;border-radius:9px;"><div class="a" style="left:2px;top:2px;width:14px;height:14px;background:#fff;border-radius:50%;box-shadow:0 1px 2px rgba(0,0,0,.15)"></div></div>
<svg class="a" style="left:1843.5px;top:134px;" width="18" height="18" viewBox="0 0 24 24" fill="none" stroke="#3e4a5e" stroke-width="1.8" stroke-linecap="round" stroke-linejoin="round"><path d="M12 3v14"/><path d="M5 10h14"/><path d="M5 21h14"/></svg>
<svg class="a" style="left:1887px;top:135px;" width="17" height="17" viewBox="0 0 24 24" fill="none" stroke="#5b21b6" stroke-width="2" stroke-linecap="round" stroke-linejoin="round"><path d="m21.64 3.64-1.28-1.28a1.21 1.21 0 0 0-1.72 0L2.36 18.64a1.21 1.21 0 0 0 0 1.72l1.28 1.28a1.2 1.2 0 0 0 1.72 0L21.64 5.36a1.2 1.2 0 0 0 0-1.72"/><path d="m14 7 3 3"/><path d="M5 6v4"/><path d="M19 14v4"/><path d="M10 2v2"/><path d="M7 8H3"/><path d="M21 16h-4"/><path d="M11 3H9"/></svg>
<svg class="a" style="left:1933.5px;top:135px;" width="17" height="17" viewBox="0 0 24 24" fill="none" stroke="#3e4a5e" stroke-width="2" stroke-linecap="round" stroke-linejoin="round"><path d="M12.22 2h-.44a2 2 0 0 0-2 2v.18a2 2 0 0 1-1 1.73l-.43.25a2 2 0 0 1-2 0l-.15-.08a2 2 0 0 0-2.73.73l-.22.38a2 2 0 0 0 .73 2.73l.15.1a2 2 0 0 1 1 1.72v.51a2 2 0 0 1-1 1.74l-.15.09a2 2 0 0 0-.73 2.73l.22.38a2 2 0 0 0 2.73.73l.15-.08a2 2 0 0 1 2 0l.43.25a2 2 0 0 1 1 1.73V20a2 2 0 0 0 2 2h.44a2 2 0 0 0 2-2v-.18a2 2 0 0 1 1-1.73l.43-.25a2 2 0 0 1 2 0l.15.08a2 2 0 0 0 2.73-.73l.22-.39a2 2 0 0 0-.73-2.73l-.15-.08a2 2 0 0 1-1-1.74v-.5a2 2 0 0 1 1-1.74l.15-.09a2 2 0 0 0 .73-2.73l-.22-.38a2 2 0 0 0-2.73-.73l-.15.08a2 2 0 0 1-2 0l-.43-.25a2 2 0 0 1-1-1.73V4a2 2 0 0 0-2-2z"/><circle cx="12" cy="12" r="3"/></svg>
<svg class="a" style="left:2158px;top:135px;" width="17" height="17" viewBox="0 0 24 24" fill="none" stroke="#3e4a5e" stroke-width="2" stroke-linecap="round" stroke-linejoin="round"><path d="m16 6 4 14"/><path d="M12 6v14"/><path d="M8 8v12"/><path d="M4 4v16"/></svg>
<div class="t" style="left:2186.00px;top:135.13px;font-size:15.2px;line-height:15.2px;color:#3e4a5e;font-weight:normal;-webkit-text-stroke:0.2px currentColor;">Library</div>
<div class="a" style="left:1008px;top:164px;width:1232px;height:569px;background:#fffffe;border-top:1px solid #e6e6e6;box-sizing:border-box;"></div>
<div class="a" style="left:1008px;top:165px;width:61px;height:568px;background:#f7f8fa;"></div>
<div class="a" style="left:1069px;top:164px;width:1175px;height:25px;border:2px solid #eeeeee;box-sizing:border-box;"></div>
<div class="a" style="left:2239px;top:164px;width:10px;height:569px;background:#fffffe;border-left:1px solid #e3e3e3;box-sizing:border-box;"></div>
<div class="a" style="left:2239px;top:164px;width:10px;height:2px;background:#333;"></div>
<div class="a" style="left:1069.5px;top:240px;width:1px;height:75px;background:#d3d3d3;"></div>
<div class="t" style="right:1211.50px;top:170.98px;font-size:17px;line-height:17px;color:#0b216f;font-weight:normal;font-family:'Liberation Mono',monospace;transform:scaleY(1.12);transform-origin:0 77%;">1</div>
<div class="t" style="left:1069.50px;top:171.11px;font-size:16.83px;line-height:16.83px;color:#000;font-weight:normal;font-family:'Liberation Mono',monospace;white-space:pre;transform:scaleY(1.1);transform-origin:0 77%;-webkit-text-stroke:0.35px currentColor;"><span style="color:#1a7a1a">// import * as wmill from "windmill-client"</span></div>
<div class="t" style="right:1211.50px;top:195.98px;font-size:17px;line-height:17px;color:#858585;font-weight:normal;font-family:'Liberation Mono',monospace;transform:scaleY(1.12);transform-origin:0 77%;">2</div>
<div class="t" style="right:1211.50px;top:220.98px;font-size:17px;line-height:17px;color:#858585;font-weight:normal;font-family:'Liberation Mono',monospace;transform:scaleY(1.12);transform-origin:0 77%;">3</div>
<div class="t" style="left:1069.50px;top:221.11px;font-size:16.83px;line-height:16.83px;color:#000;font-weight:normal;font-family:'Liberation Mono',monospace;white-space:pre;transform:scaleY(1.1);transform-origin:0 77%;-webkit-text-stroke:0.35px currentColor;"><span style="color:#0000ff">export</span> <span style="color:#0000ff">async</span> <span style="color:#0000ff">function</span> main<span style="color:#0431fa">(</span>index: <span style="color:#0000ff">number</span>, getDatesetItemsResult: <span style="color:#0000ff">object</span><span style="color:#0431fa">)</span> <span style="color:#0431fa">{</span></div>
<div class="t" style="right:1211.50px;top:245.98px;font-size:17px;line-height:17px;color:#858585;font-weight:normal;font-family:'Liberation Mono',monospace;transform:scaleY(1.12);transform-origin:0 77%;">4</div>
<div class="t" style="left:1069.50px;top:246.11px;font-size:16.83px;line-height:16.83px;color:#000;font-weight:normal;font-family:'Liberation Mono',monospace;white-space:pre;transform:scaleY(1.1);transform-origin:0 77%;-webkit-text-stroke:0.35px currentColor;">&nbsp;&nbsp;console.log<span style="color:#319331">(</span><span style="color:#7b3814">{</span>index, getDatesetItemsResult<span style="color:#7b3814">}</span><span style="color:#319331">)</span>;</div>
<div class="t" style="right:1211.50px;top:270.98px;font-size:17px;line-height:17px;color:#858585;font-weight:normal;font-family:'Liberation Mono',monospace;transform:scaleY(1.12);transform-origin:0 77%;">5</div>
<div class="t" style="right:1211.50px;top:295.98px;font-size:17px;line-height:17px;color:#858585;font-weight:normal;font-family:'Liberation Mono',monospace;transform:scaleY(1.12);transform-origin:0 77%;">6</div>
<div class="t" style="left:1069.50px;top:296.11px;font-size:16.83px;line-height:16.83px;color:#000;font-weight:normal;font-family:'Liberation Mono',monospace;white-space:pre;transform:scaleY(1.1);transform-origin:0 77%;-webkit-text-stroke:0.35px currentColor;">&nbsp;&nbsp;<span style="color:#0000ff">return</span> getDatesetItemsResult;</div>
<div class="t" style="right:1211.50px;top:320.98px;font-size:17px;line-height:17px;color:#858585;font-weight:normal;font-family:'Liberation Mono',monospace;transform:scaleY(1.12);transform-origin:0 77%;">7</div>
<div class="t" style="left:1069.50px;top:321.11px;font-size:16.83px;line-height:16.83px;color:#000;font-weight:normal;font-family:'Liberation Mono',monospace;white-space:pre;transform:scaleY(1.1);transform-origin:0 77%;-webkit-text-stroke:0.35px currentColor;"><span style="color:#0431fa">}</span></div>
<div class="t" style="right:1211.50px;top:345.98px;font-size:17px;line-height:17px;color:#858585;font-weight:normal;font-family:'Liberation Mono',monospace;transform:scaleY(1.12);transform-origin:0 77%;">8</div>
<div class="a" style="left:1008px;top:733px;width:1241px;height:1px;background:#dfe2e8;"></div>
<div class="t" style="left:1027.00px;top:742.84px;font-size:17.9px;line-height:17.9px;color:#3e4a5e;font-weight:normal;-webkit-text-stroke:0.2px currentColor;">Step Input</div>
<div class="t" style="left:1146.80px;top:742.67px;font-size:18.1px;line-height:18.1px;color:#3e4a5e;font-weight:normal;-webkit-text-stroke:0.2px currentColor;">Test this step</div>
<div class="t" style="left:1291.00px;top:742.67px;font-size:18.1px;line-height:18.1px;color:#3e4a5e;font-weight:normal;-webkit-text-stroke:0.2px currentColor;">Advanced</div>
<div class="a" style="left:1008px;top:767.5px;width:119px;height:2.5px;background:#2d3748;"></div>
<div class="a" style="left:1756px;top:770px;width:1px;height:494px;background:#e5e7eb;"></div>
<svg class="a" style="left:1635px;top:783px;" width="17" height="17" viewBox="0 0 24 24" fill="none" stroke="#5b21b6" stroke-width="2" stroke-linecap="round" stroke-linejoin="round"><path d="m21.64 3.64-1.28-1.28a1.21 1.21 0 0 0-1.72 0L2.36 18.64a1.21 1.21 0 0 0 0 1.72l1.28 1.28a1.2 1.2 0 0 0 1.72 0L21.64 5.36a1.2 1.2 0 0 0 0-1.72"/><path d="m14 7 3 3"/><path d="M5 6v4"/><path d="M19 14v4"/><path d="M10 2v2"/><path d="M7 8H3"/><path d="M21 16h-4"/><path d="M11 3H9"/></svg>
<div class="t" style="left:1663.00px;top:783.78px;font-size:14.2px;line-height:14.2px;color:#5b21b6;font-weight:bold;">Fill inputs</div>
<div class="t" style="left:1046.30px;top:834.00px;font-size:18.9px;line-height:18.9px;color:#2b3443;font-weight:bold;">index<span style="color:#e5484d">*</span></div>
<div class="t" style="left:1115.00px;top:836.96px;font-size:15.4px;line-height:15.4px;color:#3e4a5e;font-weight:normal;font-style:italic;-webkit-text-stroke:0.2px currentColor;">number</div>
<div class="a" style="left:1573px;top:829px;width:90px;height:29px;background:#eceef2;border-radius:8px;"></div>
<div class="t" style="left:1583.00px;top:837.93px;font-size:13.9px;line-height:13.9px;color:#2d3748;font-weight:bold;">Static</div>
<div class="a" style="left:1632px;top:830.7px;width:29.5px;height:25.3px;background:#fff;border-radius:7px;box-shadow:0 1px 3px rgba(0,0,0,.15);"></div>
<div class="a" style="left:1639.5px;top:836px;width:14px;height:14px;border:1.5px solid #3b82f6;border-radius:2px;box-sizing:border-box;"><div class="a" style="left:3px;top:-1px;font:italic 10px/14px 'Liberation Sans';color:#3b82f6">f</div></div>
<div class="a" style="left:1673.4px;top:828px;width:63.2px;height:31px;background:#fff;border:1px solid #e1e4ea;border-radius:8px;box-sizing:border-box;"></div>
<svg class="a" style="left:1684px;top:834px;" width="17" height="17" viewBox="0 0 24 24" fill="none" stroke="#2d3748" stroke-width="2.2" stroke-linecap="round" stroke-linejoin="round"><path d="M12 22v-5"/><path d="M9 8V2"/><path d="M15 8V2"/><path d="M18 8v5a4 4 0 0 1-4 4h-4a4 4 0 0 1-4-4V8Z"/></svg>
<svg class="a" style="left:1711px;top:835px;" width="16" height="16" viewBox="0 0 24 24" fill="none" stroke="#2d3748" stroke-width="2.2" stroke-linecap="round" stroke-linejoin="round"><path d="M5 12h14"/><path d="m12 5 7 7-7 7"/></svg>
<div class="a" style="left:1037px;top:873.3px;width:700px;height:28px;background:#fffffb;border:1px solid #e3e3e3;box-sizing:border-box;"><div class="a" style="left:0;top:0;width:28px;height:26px;background:#f7f8fa;"></div><div class="a" style="left:681px;top:0;width:1px;height:26px;background:#e0e0e0;"></div><div class="a" style="left:681px;top:-1px;width:17px;height:2px;background:#333;"></div></div>
<div class="a" style="left:1066px;top:874.8px;width:652px;height:25px;border:2px solid #eeeeee;box-sizing:border-box;"></div>
<div class="t" style="right:1191.50px;top:880.48px;font-size:17px;line-height:17px;color:#0b216f;font-weight:normal;font-family:'Liberation Mono',monospace;transform:scaleY(1.12);transform-origin:0 77%;">1</div>
<div class="t" style="left:1066.40px;top:880.71px;font-size:16.7px;line-height:16.7px;color:#000;font-weight:normal;font-family:'Liberation Mono',monospace;transform:scaleY(1.1);transform-origin:0 77%;-webkit-text-stroke:0.35px currentColor;">flow_input.iter.index</div>
<div class="t" style="left:1666.60px;top:912.30px;font-size:15.0px;line-height:15.0px;color:#2d3748;font-weight:bold;">Help</div>
<svg class="a" style="left:1709px;top:910px;" width="16" height="16" viewBox="0 0 24 24" fill="none" stroke="#2d3748" stroke-width="2.2" stroke-linecap="round" stroke-linejoin="round"><path d="m6 9 6 6 6-6"/></svg>
<div class="t" style="left:1046.30px;top:977.49px;font-size:19.5px;line-height:19.5px;color:#2b3443;font-weight:bold;">getDatesetItemsResult<span style="color:#e5484d">*</span></div>
<div class="t" style="left:1274.80px;top:980.96px;font-size:15.4px;line-height:15.4px;color:#3e4a5e;font-weight:normal;font-style:italic;-webkit-text-stroke:0.2px currentColor;">object</div>
<div class="a" style="left:1573px;top:973px;width:90px;height:29px;background:#eceef2;border-radius:8px;"></div>
<div class="t" style="left:1583.00px;top:981.93px;font-size:13.9px;line-height:13.9px;color:#2d3748;font-weight:bold;">Static</div>
<div class="a" style="left:1632px;top:974.7px;width:29.5px;height:25.3px;background:#fff;border-radius:7px;box-shadow:0 1px 3px rgba(0,0,0,.15);"></div>
<div class="a" style="left:1639.5px;top:980px;width:14px;height:14px;border:1.5px solid #3b82f6;border-radius:2px;box-sizing:border-box;"><div class="a" style="left:3px;top:-1px;font:italic 10px/14px 'Liberation Sans';color:#3b82f6">f</div></div>
<div class="a" style="left:1673.4px;top:972px;width:63.2px;height:31px;background:#fff;border:1px solid #e1e4ea;border-radius:8px;box-sizing:border-box;"></div>
<svg class="a" style="left:1684px;top:978px;" width="17" height="17" viewBox="0 0 24 24" fill="none" stroke="#2d3748" stroke-width="2.2" stroke-linecap="round" stroke-linejoin="round"><path d="M12 22v-5"/><path d="M9 8V2"/><path d="M15 8V2"/><path d="M18 8v5a4 4 0 0 1-4 4h-4a4 4 0 0 1-4-4V8Z"/></svg>
<svg class="a" style="left:1711px;top:979px;" width="16" height="16" viewBox="0 0 24 24" fill="none" stroke="#2d3748" stroke-width="2.2" stroke-linecap="round" stroke-linejoin="round"><path d="M5 12h14"/><path d="m12 5 7 7-7 7"/></svg>
<div class="a" style="left:1037px;top:1017.3px;width:700px;height:28px;background:#fffffb;border:1px solid #e3e3e3;box-sizing:border-box;"><div class="a" style="left:0;top:0;width:28px;height:26px;background:#f7f8fa;"></div><div class="a" style="left:681px;top:0;width:1px;height:26px;background:#e0e0e0;"></div><div class="a" style="left:681px;top:-1px;width:17px;height:2px;background:#333;"></div></div>
<div class="a" style="left:1066px;top:1018.8px;width:652px;height:25px;border:2px solid #eeeeee;box-sizing:border-box;"></div>
<div class="t" style="right:1191.50px;top:1024.48px;font-size:17px;line-height:17px;color:#0b216f;font-weight:normal;font-family:'Liberation Mono',monospace;transform:scaleY(1.12);transform-origin:0 77%;">1</div>
<div class="t" style="left:1066.40px;top:1024.71px;font-size:16.7px;line-height:16.7px;color:#000;font-weight:normal;font-family:'Liberation Mono',monospace;transform:scaleY(1.1);transform-origin:0 77%;-webkit-text-stroke:0.35px currentColor;">flow_input.iter.value</div>
<div class="t" style="left:1666.60px;top:1056.30px;font-size:15.0px;line-height:15.0px;color:#2d3748;font-weight:bold;">Help</div>
<svg class="a" style="left:1709px;top:1054px;" width="16" height="16" viewBox="0 0 24 24" fill="none" stroke="#2d3748" stroke-width="2.2" stroke-linecap="round" stroke-linejoin="round"><path d="m6 9 6 6 6-6"/></svg>
<div class="a" style="left:1008px;top:769.5px;width:1241px;height:1px;background:#e5e7eb;"></div>
<div class="a" style="left:1757px;top:771px;width:492px;height:493px;background:#fff;"></div>
<div class="a" style="left:1762px;top:775px;width:487px;height:40.5px;background:#fbfcfd;border:1px solid #d3d7de;border-radius:8px;box-sizing:border-box;"></div>
<div class="t" style="left:1772.50px;top:786.93px;font-size:17.8px;line-height:17.8px;color:#5f6b7c;font-weight:normal;-webkit-text-stroke:0.2px currentColor;">Search prop...</div>
<div class="a" style="left:1757px;top:821px;width:474px;height:443px;background:#f0f2f6;"></div>
<div class="a" style="left:2231px;top:821px;width:14.5px;height:443px;background:#f8f8f8;border-left:1px solid #e4e4e4;border-right:1px solid #ececec;box-sizing:border-box;"></div>
<div class="a" style="left:2234.8px;top:826px;width:8.2px;height:339px;background:#b3b3b3;border-radius:4px;"></div>
<div class="t" style="left:1768.00px;top:830.36px;font-size:16.5px;line-height:16.5px;color:#2d3748;font-weight:normal;font-family:'Liberation Mono',monospace;transform:scaleY(1.1);transform-origin:0 77%;-webkit-text-stroke:0.2px currentColor;">flow_input</div>
<div class="a" style="left:1767.6px;top:853.6px;width:82.61999999999999px;height:19px;background:#fff;border:1px solid #e0e3e8;border-radius:6px;box-sizing:border-box;"></div>
<div class="t" style="left:1773.00px;top:856.91px;font-size:13.3px;line-height:13.3px;color:#1f2937;font-weight:normal;font-family:'Liberation Mono',monospace;transform:scaleY(1.08);transform-origin:0 77%;-webkit-text-stroke:0.2px currentColor;">createdAt</div>
<div class="t" style="left:1854.22px;top:855.75px;font-size:14px;line-height:14px;color:#3e4a5e;font-weight:normal;-webkit-text-stroke:0.2px currentColor;">:</div>
<div class="t" style="left:1865.22px;top:855.62px;font-size:14.5px;line-height:14.5px;color:#3e4a5e;font-weight:normal;-webkit-text-stroke:0.2px currentColor;">undefined</div>
<div class="a" style="left:1767.6px;top:878.6px;width:82.61999999999999px;height:19px;background:#fff;border:1px solid #e0e3e8;border-radius:6px;box-sizing:border-box;"></div>
<div class="t" style="left:1773.00px;top:881.91px;font-size:13.3px;line-height:13.3px;color:#1f2937;font-weight:normal;font-family:'Liberation Mono',monospace;transform:scaleY(1.08);transform-origin:0 77%;-webkit-text-stroke:0.2px currentColor;">eventData</div>
<div class="t" style="left:1854.22px;top:880.75px;font-size:14px;line-height:14px;color:#3e4a5e;font-weight:normal;-webkit-text-stroke:0.2px currentColor;">:</div>
<div class="t" style="left:1865.22px;top:880.62px;font-size:14.5px;line-height:14.5px;color:#3e4a5e;font-weight:normal;-webkit-text-stroke:0.2px currentColor;">undefined</div>
<div class="a" style="left:1767.6px;top:903.6px;width:82.61999999999999px;height:19px;background:#fff;border:1px solid #e0e3e8;border-radius:6px;box-sizing:border-box;"></div>
<div class="t" style="left:1773.00px;top:906.91px;font-size:13.3px;line-height:13.3px;color:#1f2937;font-weight:normal;font-family:'Liberation Mono',monospace;transform:scaleY(1.08);transform-origin:0 77%;-webkit-text-stroke:0.2px currentColor;">eventType</div>
<div class="t" style="left:1854.22px;top:905.75px;font-size:14px;line-height:14px;color:#3e4a5e;font-weight:normal;-webkit-text-stroke:0.2px currentColor;">:</div>
<div class="t" style="left:1865.22px;top:905.62px;font-size:14.5px;line-height:14.5px;color:#3e4a5e;font-weight:normal;-webkit-text-stroke:0.2px currentColor;">undefined</div>
<div class="a" style="left:1767.6px;top:928.6px;width:74.64px;height:19px;background:#fff;border:1px solid #e0e3e8;border-radius:6px;box-sizing:border-box;"></div>
<div class="t" style="left:1773.00px;top:931.91px;font-size:13.3px;line-height:13.3px;color:#1f2937;font-weight:normal;font-family:'Liberation Mono',monospace;transform:scaleY(1.08);transform-origin:0 77%;-webkit-text-stroke:0.2px currentColor;">resource</div>
<div class="t" style="left:1846.24px;top:930.75px;font-size:14px;line-height:14px;color:#3e4a5e;font-weight:normal;-webkit-text-stroke:0.2px currentColor;">:</div>
<div class="t" style="left:1857.24px;top:930.62px;font-size:14.5px;line-height:14.5px;color:#3e4a5e;font-weight:normal;-webkit-text-stroke:0.2px currentColor;">undefined</div>
<div class="a" style="left:1767.6px;top:953.6px;width:58.68000000000001px;height:19px;background:#fff;border:1px solid #e0e3e8;border-radius:6px;box-sizing:border-box;"></div>
<div class="t" style="left:1773.00px;top:956.91px;font-size:13.3px;line-height:13.3px;color:#1f2937;font-weight:normal;font-family:'Liberation Mono',monospace;transform:scaleY(1.08);transform-origin:0 77%;-webkit-text-stroke:0.2px currentColor;">userId</div>
<div class="t" style="left:1830.28px;top:955.75px;font-size:14px;line-height:14px;color:#3e4a5e;font-weight:normal;-webkit-text-stroke:0.2px currentColor;">:</div>
<div class="t" style="left:1841.28px;top:955.62px;font-size:14.5px;line-height:14.5px;color:#3e4a5e;font-weight:normal;-webkit-text-stroke:0.2px currentColor;">undefined</div>
<div class="a" style="left:1767.6px;top:978.6px;width:42.72px;height:19px;background:#fff;border:1px solid #e0e3e8;border-radius:6px;box-sizing:border-box;"></div>
<div class="t" style="left:1773.00px;top:981.91px;font-size:13.3px;line-height:13.3px;color:#1f2937;font-weight:normal;font-family:'Liberation Mono',monospace;transform:scaleY(1.08);transform-origin:0 77%;-webkit-text-stroke:0.2px currentColor;">iter</div>
<div class="t" style="left:1815.32px;top:980.75px;font-size:14px;line-height:14px;color:#3e4a5e;font-weight:normal;-webkit-text-stroke:0.2px currentColor;">:</div>
<div class="a" style="left:1823.32px;top:978.6px;width:18.98px;height:19px;background:#fff;border:1px solid #e0e3e8;border-radius:6px;box-sizing:border-box;"></div>
<div class="t" style="left:1828.82px;top:981.91px;font-size:13.3px;line-height:13.3px;color:#1f2937;font-weight:normal;font-family:'Liberation Mono',monospace;transform:scaleY(1.08);transform-origin:0 77%;-webkit-text-stroke:0.2px currentColor;">&#8211;</div>
<div class="a" style="left:1770px;top:1003px;width:1px;height:45px;border-left:1px dotted #d6d8dd;"></div>
<div class="a" style="left:1777.7px;top:1003.6px;width:50.7px;height:19px;background:#fff;border:1px solid #e0e3e8;border-radius:6px;box-sizing:border-box;"></div>
<div class="t" style="left:1783.10px;top:1006.91px;font-size:13.3px;line-height:13.3px;color:#1f2937;font-weight:normal;font-family:'Liberation Mono',monospace;transform:scaleY(1.08);transform-origin:0 77%;-webkit-text-stroke:0.2px currentColor;">value</div>
<div class="t" style="left:1833.40px;top:1005.75px;font-size:14px;line-height:14px;color:#3e4a5e;font-weight:normal;-webkit-text-stroke:0.2px currentColor;">:</div>
<div class="t" style="left:1843.40px;top:1005.37px;font-size:14.8px;line-height:14.8px;color:#2f9e44;font-weight:normal;-webkit-text-stroke:0.2px currentColor;">"Iteration's value"</div>
<div class="a" style="left:1777.7px;top:1028.6px;width:50.7px;height:19px;background:#fff;border:1px solid #e0e3e8;border-radius:6px;box-sizing:border-box;"></div>
<div class="t" style="left:1783.10px;top:1031.91px;font-size:13.3px;line-height:13.3px;color:#1f2937;font-weight:normal;font-family:'Liberation Mono',monospace;transform:scaleY(1.08);transform-origin:0 77%;-webkit-text-stroke:0.2px currentColor;">index</div>
<div class="t" style="left:1833.40px;top:1030.75px;font-size:14px;line-height:14px;color:#3e4a5e;font-weight:normal;-webkit-text-stroke:0.2px currentColor;">:</div>
<div class="t" style="left:1843.40px;top:1030.37px;font-size:14.8px;line-height:14.8px;color:#2f9e44;font-weight:normal;-webkit-text-stroke:0.2px currentColor;">"Iteration's index"</div>
<div class="a" style="left:2211px;top:849.5px;width:19px;height:17px;background:#fff;border-radius:8px;"></div>
<svg class="a" style="left:2213.5px;top:851.0px;" width="14" height="14" viewBox="0 0 24 24" fill="none" stroke="#3e4a5e" stroke-width="2.2" stroke-linecap="round" stroke-linejoin="round"><circle cx="11" cy="11" r="8"/><path d="m21 21-4.3-4.3"/></svg>
<div class="a" style="left:2211px;top:1069.5px;width:19px;height:17px;background:#fff;border-radius:8px;"></div>
<svg class="a" style="left:2213.5px;top:1071.0px;" width="14" height="14" viewBox="0 0 24 24" fill="none" stroke="#3e4a5e" stroke-width="2.2" stroke-linecap="round" stroke-linejoin="round"><circle cx="11" cy="11" r="8"/><path d="m21 21-4.3-4.3"/></svg>
<div class="t" style="left:1768.00px;top:1077.36px;font-size:16.5px;line-height:16.5px;color:#2d3748;font-weight:normal;font-family:'Liberation Mono',monospace;transform:scaleY(1.1);transform-origin:0 77%;-webkit-text-stroke:0.2px currentColor;">results</div>
<div class="a" style="left:1767.7px;top:1102px;width:17.98px;height:19px;background:#fff;border:1px solid #e0e3e8;border-radius:6px;box-sizing:border-box;"></div>
<div class="t" style="left:1772.70px;top:1105.31px;font-size:13.3px;line-height:13.3px;color:#1f2937;font-weight:normal;font-family:'Liberation Mono',monospace;transform:scaleY(1.08);transform-origin:0 77%;-webkit-text-stroke:0.2px currentColor;">a</div>
<div class="t" style="left:1789.18px;top:1104.15px;font-size:14px;line-height:14px;color:#3e4a5e;font-weight:normal;-webkit-text-stroke:0.2px currentColor;">:</div>
<div class="a" style="left:1797.68px;top:1102px;width:30.4px;height:19px;background:#fff;border:1px solid #e0e3e8;border-radius:6px;box-sizing:border-box;"></div>
<div class="t" style="left:1802.98px;top:1107.07px;font-size:11px;line-height:11px;color:#1f2937;font-weight:normal;font-family:'Liberation Mono',monospace;transform:scaleY(1.08);transform-origin:0 77%;-webkit-text-stroke:0.2px currentColor;">{&#8230;}</div>
<div class="a" style="left:1767.7px;top:1127px;width:17.98px;height:19px;background:#fff;border:1px solid #e0e3e8;border-radius:6px;box-sizing:border-box;"></div>
<div class="t" style="left:1772.70px;top:1130.31px;font-size:13.3px;line-height:13.3px;color:#1f2937;font-weight:normal;font-family:'Liberation Mono',monospace;transform:scaleY(1.08);transform-origin:0 77%;-webkit-text-stroke:0.2px currentColor;">c</div>
<div class="t" style="left:1790.68px;top:1129.15px;font-size:14px;line-height:14px;color:#3e4a5e;font-weight:normal;-webkit-text-stroke:0.2px currentColor;">:</div>
<div class="a" style="left:1798.68px;top:1127px;width:19.98px;height:19px;background:#fff;border:1px solid #e0e3e8;border-radius:6px;box-sizing:border-box;"></div>
<div class="t" style="left:1804.68px;top:1130.31px;font-size:13.3px;line-height:13.3px;color:#1f2937;font-weight:normal;font-family:'Liberation Mono',monospace;transform:scaleY(1.08);transform-origin:0 77%;-webkit-text-stroke:0.2px currentColor;">&#8211;</div>
<div class="a" style="left:1770px;top:1150px;width:1px;height:114px;border-left:1px dotted #d6d8dd;"></div>
<div class="a" style="left:1777.7px;top:1152px;width:17.98px;height:19px;background:#fff;border:1px solid #e0e3e8;border-radius:6px;box-sizing:border-box;"></div>
<div class="t" style="left:1782.70px;top:1155.31px;font-size:13.3px;line-height:13.3px;color:#1f2937;font-weight:normal;font-family:'Liberation Mono',monospace;transform:scaleY(1.08);transform-origin:0 77%;-webkit-text-stroke:0.2px currentColor;">0</div>
<div class="t" style="left:1799.18px;top:1154.15px;font-size:14px;line-height:14px;color:#3e4a5e;font-weight:normal;-webkit-text-stroke:0.2px currentColor;">:</div>
<div class="a" style="left:1807.68px;top:1152px;width:30.4px;height:19px;background:#fff;border:1px solid #e0e3e8;border-radius:6px;box-sizing:border-box;"></div>
<div class="t" style="left:1812.98px;top:1157.07px;font-size:11px;line-height:11px;color:#1f2937;font-weight:normal;font-family:'Liberation Mono',monospace;transform:scaleY(1.08);transform-origin:0 77%;-webkit-text-stroke:0.2px currentColor;">{&#8230;}</div>
<div class="a" style="left:1777.7px;top:1177px;width:17.98px;height:19px;background:#fff;border:1px solid #e0e3e8;border-radius:6px;box-sizing:border-box;"></div>
<div class="t" style="left:1782.70px;top:1180.31px;font-size:13.3px;line-height:13.3px;color:#1f2937;font-weight:normal;font-family:'Liberation Mono',monospace;transform:scaleY(1.08);transform-origin:0 77%;-webkit-text-stroke:0.2px currentColor;">1</div>
<div class="t" style="left:1799.18px;top:1179.15px;font-size:14px;line-height:14px;color:#3e4a5e;font-weight:normal;-webkit-text-stroke:0.2px currentColor;">:</div>
<div class="a" style="left:1807.68px;top:1177px;width:30.4px;height:19px;background:#fff;border:1px solid #e0e3e8;border-radius:6px;box-sizing:border-box;"></div>
<div class="t" style="left:1812.98px;top:1182.07px;font-size:11px;line-height:11px;color:#1f2937;font-weight:normal;font-family:'Liberation Mono',monospace;transform:scaleY(1.08);transform-origin:0 77%;-webkit-text-stroke:0.2px currentColor;">{&#8230;}</div>
<div class="a" style="left:1777.7px;top:1202px;width:17.98px;height:19px;background:#fff;border:1px solid #e0e3e8;border-radius:6px;box-sizing:border-box;"></div>
<div class="t" style="left:1782.70px;top:1205.31px;font-size:13.3px;line-height:13.3px;color:#1f2937;font-weight:normal;font-family:'Liberation Mono',monospace;transform:scaleY(1.08);transform-origin:0 77%;-webkit-text-stroke:0.2px currentColor;">2</div>
<div class="t" style="left:1799.18px;top:1204.15px;font-size:14px;line-height:14px;color:#3e4a5e;font-weight:normal;-webkit-text-stroke:0.2px currentColor;">:</div>
<div class="a" style="left:1807.68px;top:1202px;width:30.4px;height:19px;background:#fff;border:1px solid #e0e3e8;border-radius:6px;box-sizing:border-box;"></div>
<div class="t" style="left:1812.98px;top:1207.07px;font-size:11px;line-height:11px;color:#1f2937;font-weight:normal;font-family:'Liberation Mono',monospace;transform:scaleY(1.08);transform-origin:0 77%;-webkit-text-stroke:0.2px currentColor;">{&#8230;}</div>
<div class="a" style="left:1777.7px;top:1227px;width:17.98px;height:19px;background:#fff;border:1px solid #e0e3e8;border-radius:6px;box-sizing:border-box;"></div>
<div class="t" style="left:1782.70px;top:1230.31px;font-size:13.3px;line-height:13.3px;color:#1f2937;font-weight:normal;font-family:'Liberation Mono',monospace;transform:scaleY(1.08);transform-origin:0 77%;-webkit-text-stroke:0.2px currentColor;">3</div>
<div class="t" style="left:1799.18px;top:1229.15px;font-size:14px;line-height:14px;color:#3e4a5e;font-weight:normal;-webkit-text-stroke:0.2px currentColor;">:</div>
<div class="a" style="left:1807.68px;top:1227px;width:30.4px;height:19px;background:#fff;border:1px solid #e0e3e8;border-radius:6px;box-sizing:border-box;"></div>
<div class="t" style="left:1812.98px;top:1232.07px;font-size:11px;line-height:11px;color:#1f2937;font-weight:normal;font-family:'Liberation Mono',monospace;transform:scaleY(1.08);transform-origin:0 77%;-webkit-text-stroke:0.2px currentColor;">{&#8230;}</div>
<div class="a" style="left:1777.7px;top:1252px;width:17.98px;height:19px;background:#fff;border:1px solid #e0e3e8;border-radius:6px;box-sizing:border-box;"></div>
<div class="t" style="left:1782.70px;top:1255.31px;font-size:13.3px;line-height:13.3px;color:#1f2937;font-weight:normal;font-family:'Liberation Mono',monospace;transform:scaleY(1.08);transform-origin:0 77%;-webkit-text-stroke:0.2px currentColor;">4</div>
<div class="t" style="left:1799.18px;top:1254.15px;font-size:14px;line-height:14px;color:#3e4a5e;font-weight:normal;-webkit-text-stroke:0.2px currentColor;">:</div>
<div class="a" style="left:1807.68px;top:1252px;width:30.4px;height:19px;background:#fff;border:1px solid #e0e3e8;border-radius:6px;box-sizing:border-box;"></div>
<div class="t" style="left:1812.98px;top:1257.07px;font-size:11px;line-height:11px;color:#1f2937;font-weight:normal;font-family:'Liberation Mono',monospace;transform:scaleY(1.08);transform-origin:0 77%;-webkit-text-stroke:0.2px currentColor;">{&#8230;}</div>
<div class="a" style="left:1008px;top:59px;width:898px;height:424px;border:3px solid #ef8c22;box-sizing:border-box;"></div>
<div class="a" style="left:482px;top:872px;width:429px;height:107.5px;border:3px solid #ef8c22;box-sizing:border-box;"></div>
<svg class="a" style="left:0;top:0" width="1007" height="1264"><path d="M924.5 925 V1140" stroke="#ef8c22" stroke-width="4"/><path d="M914.7 1138 L935 1138 L925 1157.5 Z" fill="#ef8c22"/></svg>
</body></html>
